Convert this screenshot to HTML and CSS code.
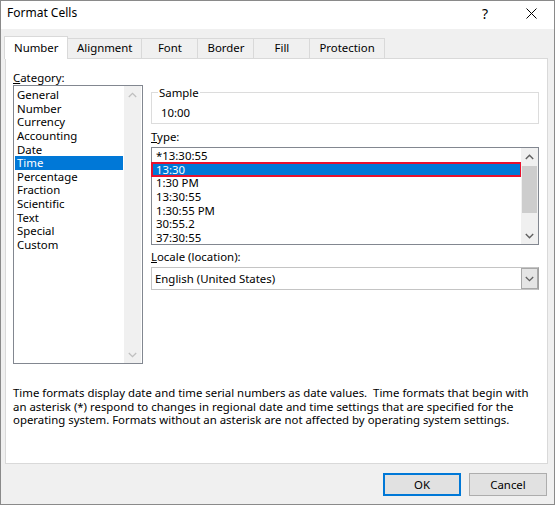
FILE: index.html
```html
<!DOCTYPE html>
<html>
<head>
<meta charset="utf-8">
<title>Format Cells</title>
<link rel="stylesheet" href="styles.css">
</head>
<body>
<div class="window">
  <div class="titlebar">
    <span class="title">Format Cells</span>
    <span class="help">?</span>
    <span class="close"><svg width="11" height="11" viewBox="0 0 11 11"><path d="M0.5 0.5L10.5 10.5M10.5 0.5L0.5 10.5" stroke="#000" stroke-width="1" fill="none"/></svg></span>
  </div>
  <div class="tabs">
    <div class="tab active">Number</div>
    <div class="tab">Alignment</div>
    <div class="tab">Font</div>
    <div class="tab">Border</div>
    <div class="tab">Fill</div>
    <div class="tab">Protection</div>
  </div>
  <div class="panel">
    <div class="main">
      <div class="col-left">
        <div class="label"><u>C</u>ategory:</div>
        <div class="listbox cat">
          <div class="items">
            <div class="item">General</div>
            <div class="item">Number</div>
            <div class="item">Currency</div>
            <div class="item">Accounting</div>
            <div class="item">Date</div>
            <div class="item selected">Time</div>
            <div class="item">Percentage</div>
            <div class="item">Fraction</div>
            <div class="item">Scientific</div>
            <div class="item">Text</div>
            <div class="item">Special</div>
            <div class="item">Custom</div>
          </div>
          <div class="vscroll disabled">
            <div class="arrow"><svg width="9" height="6" viewBox="0 0 9 6"><path d="M0.8 5L4.5 1.3L8.2 5" stroke="currentColor" stroke-width="1.3" fill="none"/></svg></div>
            <div class="track"></div>
            <div class="arrow"><svg width="9" height="6" viewBox="0 0 9 6"><path d="M0.8 1L4.5 4.7L8.2 1" stroke="currentColor" stroke-width="1.3" fill="none"/></svg></div>
          </div>
        </div>
      </div>
      <div class="col-right">
        <fieldset class="sample">
          <legend>Sample</legend>
          <div class="sample-value">10:00</div>
        </fieldset>
        <div class="label type-label"><u>T</u>ype:</div>
        <div class="listbox type">
          <div class="items">
            <div class="item">*13:30:55</div>
            <div class="item selected marked">13:30</div>
            <div class="item">1:30 PM</div>
            <div class="item">13:30:55</div>
            <div class="item">1:30:55 PM</div>
            <div class="item">30:55.2</div>
            <div class="item">37:30:55</div>
          </div>
          <div class="vscroll">
            <div class="arrow"><svg width="9" height="6" viewBox="0 0 9 6"><path d="M0.8 5L4.5 1.3L8.2 5" stroke="currentColor" stroke-width="1.4" fill="none"/></svg></div>
            <div class="track"><div class="thumb"></div></div>
            <div class="arrow"><svg width="9" height="6" viewBox="0 0 9 6"><path d="M0.8 1L4.5 4.7L8.2 1" stroke="currentColor" stroke-width="1.4" fill="none"/></svg></div>
          </div>
        </div>
        <div class="label locale-label"><u>L</u>ocale (location):</div>
        <div class="combo">
          <span class="combo-text">English (United States)</span>
          <span class="combo-btn"><svg width="9" height="6" viewBox="0 0 9 6"><path d="M0.8 1L4.5 4.7L8.2 1" stroke="#606060" stroke-width="1.3" fill="none"/></svg></span>
        </div>
      </div>
    </div>
    <p class="desc">Time formats display date and time serial numbers as date values.&nbsp; Time formats that begin with<br>an asterisk (*) respond to changes in regional date and time settings that are specified for the<br>operating system. Formats without an asterisk are not affected by operating system settings.</p>
  </div>
  <div class="buttons">
    <button class="btn default">OK</button>
    <button class="btn">Cancel</button>
  </div>
</div>
</body>
</html>
```

FILE: styles.css
```css
* { box-sizing: border-box; }

body {
  margin: 0;
  font-family: "Noto Sans", "Open Sans", sans-serif;
  font-size: 11.4px;
  color: #000;
  background: #fff;
}

.window {
  width: 555px;
  height: 505px;
  border: 1px solid #8a8a8a;
  background: #f0f0f0;
  display: flex;
  flex-direction: column;
}

.titlebar {
  height: 28px;
  flex: none;
  background: #fff;
  display: flex;
  align-items: flex-start;
  padding-top: 4px;
  padding-left: 6px;
  font-size: 12px;
  line-height: 16px;
}

.title { flex: 1; }

.help {
  width: 46px;
  text-align: center;
  font-size: 14px;
  line-height: 17px;
}

.close {
  width: 46px;
  display: flex;
  justify-content: center;
  padding-top: 3px;
}

.tabs {
  height: 29px;
  flex: none;
  display: flex;
  align-items: flex-end;
  padding-left: 3px;
}

.tab {
  height: 20px;
  min-width: 57px;
  padding: 0 9px;
  margin-left: -1px;
  border: 1px solid #d9d9d9;
  border-bottom: none;
  background: #f0f0f0;
  text-align: center;
  line-height: 18px;
}

.tab.active {
  height: 23px;
  width: 64px;
  margin-left: 0;
  margin-bottom: -1px;
  margin-right: 0;
  background: #fff;
  line-height: 22px;
  position: relative;
  z-index: 1;
}

.panel {
  height: 406px;
  flex: none;
  margin: 0 6px 0 4px;
  background: #fff;
  border: 1px solid #d9d9d9;
  padding: 11px 7px 0 7px;
}

.main {
  display: grid;
  grid-template-columns: 130px 388px;
  column-gap: 8px;
}

.label {
  line-height: 15px;
  height: 15px;
}

.col-right {
  padding-top: 15px;
  display: flex;
  flex-direction: column;
}

.listbox {
  border: 1px solid #828790;
  background: #fff;
  display: flex;
}

.listbox .items {
  flex: 1;
  min-width: 0;
}

.listbox.cat {
  height: 279px;
}

.listbox.cat .items {
  padding: 2px 1px 0 1px;
}

.listbox.cat .item {
  line-height: 13.65px;
  height: 13.65px;
  padding-left: 2px;
}

.listbox.type {
  height: 98px;
  margin-top: 3px;
}

.listbox.type .items {
  padding-top: 1px;
}

.listbox.type .item {
  line-height: 13.65px;
  height: 13.65px;
  padding-left: 4px;
}

.item.selected {
  background: #0078d7;
  color: #fff;
}

.item.marked {
  outline: 2px solid #e8112d;
  outline-offset: -1px;
}

.vscroll {
  width: 17px;
  flex: none;
  background: #f0f0f0;
  display: flex;
  flex-direction: column;
  color: #606060;
}

.vscroll.disabled { color: #bfbfbf; }

.listbox.cat .vscroll { margin-right: 1px; }

.vscroll .arrow {
  height: 17px;
  flex: none;
  display: flex;
  align-items: center;
  justify-content: center;
}

.vscroll .track {
  flex: 1;
  padding: 1px 1px 0 1px;
}

.vscroll .thumb {
  height: 47px;
  background: #cdcdcd;
}

.sample {
  margin: 0;
  border: 1px solid #dcdcdc;
  padding: 5px 6px 3px 6px;
  min-width: 0;
}

.sample legend {
  padding: 0 1px;
  line-height: 15px;
}

.sample-value {
  line-height: 15px;
  padding-left: 3px;
}

.type-label { margin-top: 5px; }
.locale-label { margin-top: 4px; }

.combo {
  margin-top: 3px;
  height: 23px;
  border: 1px solid #c4c4c4;
  border-right-color: #a0a0a0;
  background: #fff;
  display: flex;
  align-items: stretch;
}

.combo-text {
  flex: 1;
  padding-left: 3px;
  line-height: 21px;
}

.combo-btn {
  width: 17px;
  flex: none;
  background: #e5e5e5;
  border: 1px solid #a8a8a8;
  display: flex;
  align-items: center;
  justify-content: center;
}

.desc {
  margin: 22px 0 0 0;
  line-height: 13.5px;
  white-space: nowrap;
}

.buttons {
  flex: 1;
  display: flex;
  justify-content: flex-end;
  align-items: flex-start;
  gap: 8px;
  padding: 9px 7px 0 0;
}

.btn {
  width: 78px;
  height: 23px;
  font-family: inherit;
  font-size: 11.4px;
  color: #000;
  background: #e1e1e1;
  border: 1px solid #adadad;
  padding: 0;
  margin: 0;
}

.btn.default {
  border: 2px solid #0078d7;
}
```
